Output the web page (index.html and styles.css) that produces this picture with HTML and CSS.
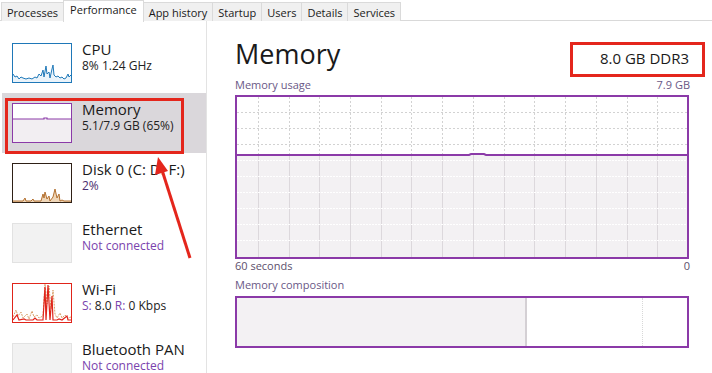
FILE: index.html
```html
<!DOCTYPE html>
<html lang="en">
<head>
    <meta charset="UTF-8">
    <title>Task Manager - Performance</title>
    <link rel="stylesheet" href="styles.css">
</head>
<body>
    <div class="tabs">
        <div class="tab">Processes</div>
        <div class="tab active">Performance</div>
        <div class="tab">App history</div>
        <div class="tab">Startup</div>
        <div class="tab">Users</div>
        <div class="tab">Details</div>
        <div class="tab">Services</div>
    </div>

    <div class="main">
        <div class="sidebar">
            <div class="item">
                <div class="thumb thumb-cpu">
                    <svg width="58" height="38" viewBox="0 0 58 38">
                        <polygon fill="#eaf3fa" points="0,38 0,30 2,33 4,32 6,35 8,33 10,34 13,35 16,34 19,35 22,33 24,34 26,30 28,32 30,26 31,33 33,22 34,30 36,28 37,34 39,25 40,21 41,31 43,33 45,32 47,34 49,33 51,35 53,34 55,30 56,33 58,31 58,38"/>
                        <polyline fill="none" stroke="#1f78b8" stroke-width="1" points="0,30 2,33 4,32 6,35 8,33 10,34 13,35 16,34 19,35 22,33 24,34 26,30 28,32 30,26 31,33 33,22 34,30 36,28 37,34 39,25 40,21 41,31 43,33 45,32 47,34 49,33 51,35 53,34 55,30 56,33 58,31"/>
                    </svg>
                </div>
                <div class="info">
                    <div class="name">CPU</div>
                    <div class="sub">8% 1.24 GHz</div>
                </div>
            </div>
            <div class="item selected">
                <div class="thumb thumb-mem">
                    <svg width="58" height="38" viewBox="0 0 58 38">
                        <rect x="0" y="15" width="58" height="23" fill="#f2eef2"/>
                        <polyline fill="none" stroke="#8b3aa8" stroke-width="1.2" points="0,15 31,15 31,14 34,14 34,15 58,15"/>
                    </svg>
                </div>
                <div class="info">
                    <div class="name">Memory</div>
                    <div class="sub">5.1/7.9 GB (65%)</div>
                </div>
            </div>
            <div class="item">
                <div class="thumb thumb-disk">
                    <svg width="58" height="38" viewBox="0 0 58 38">
                        <polygon fill="#efd6b8" points="0,38 0,37 10,37 12,34 13,37 18,37 20,35 21,37 28,37 30,30 31,34 32,28 34,35 36,32 37,37 40,33 42,25 44,34 46,30 47,37 49,36 51,37 58,37 58,38"/>
                        <polyline fill="none" stroke="#b3702f" stroke-width="1" points="0,37 10,37 12,34 13,37 18,37 20,35 21,37 28,37 30,30 31,34 32,28 34,35 36,32 37,37 40,33 42,25 44,34 46,30 47,37 49,36 51,37 58,37"/>
                    </svg>
                </div>
                <div class="info">
                    <div class="name">Disk 0 (C: D: F:)</div>
                    <div class="sub sub-pct">2%</div>
                </div>
            </div>
            <div class="item">
                <div class="thumb thumb-off"></div>
                <div class="info">
                    <div class="name">Ethernet</div>
                    <div class="sub sub-off">Not connected</div>
                </div>
            </div>
            <div class="item">
                <div class="thumb thumb-wifi">
                    <svg width="58" height="38" viewBox="0 0 58 38">
                        <polyline fill="none" stroke="#d9a06a" stroke-width="1" stroke-dasharray="2 1" points="0,33 3,26 5,32 8,28 10,34 14,30 16,35 19,27 21,33 24,31 26,34 30,32 32,0 34,20 36,2 38,25 40,6 42,30 44,34 47,29 49,34 52,31 55,34 58,33"/>
                        <polyline fill="none" stroke="#e0241a" stroke-width="1.2" points="0,36 4,31 6,36 11,35 13,36 20,36 22,34 24,36 30,36 32,3 33,36 35,1 37,36 39,12 40,36 44,36 46,35 49,36 54,32 55,36 58,36"/>
                    </svg>
                </div>
                <div class="info">
                    <div class="name">Wi-Fi</div>
                    <div class="sub"><span class="lbl">S:</span> 8.0 <span class="lbl">R:</span> 0 Kbps</div>
                </div>
            </div>
            <div class="item">
                <div class="thumb thumb-off"></div>
                <div class="info">
                    <div class="name">Bluetooth PAN</div>
                    <div class="sub sub-off">Not connected</div>
                </div>
            </div>
        </div>

        <div class="panel">
            <div class="head">
                <h1>Memory</h1>
                <div class="spec">8.0 GB DDR3</div>
            </div>
            <div class="caption">
                <span>Memory usage</span>
                <span>7.9 GB</span>
            </div>
            <div class="graph">
                <svg width="450" height="160" viewBox="0 0 450 160">
                    <rect x="0" y="57" width="450" height="103" fill="#f3f1f3"/>
                    <g stroke="#d2d2d2" stroke-width="1" stroke-dasharray="2 2">
                        <line x1="21.5" y1="0" x2="21.5" y2="57"/>
                        <line x1="52.5" y1="0" x2="52.5" y2="57"/>
                        <line x1="82.5" y1="0" x2="82.5" y2="57"/>
                        <line x1="113.5" y1="0" x2="113.5" y2="57"/>
                        <line x1="144.5" y1="0" x2="144.5" y2="57"/>
                        <line x1="174.5" y1="0" x2="174.5" y2="57"/>
                        <line x1="205.5" y1="0" x2="205.5" y2="57"/>
                        <line x1="236.5" y1="0" x2="236.5" y2="57"/>
                        <line x1="267.5" y1="0" x2="267.5" y2="57"/>
                        <line x1="297.5" y1="0" x2="297.5" y2="57"/>
                        <line x1="328.5" y1="0" x2="328.5" y2="57"/>
                        <line x1="359.5" y1="0" x2="359.5" y2="57"/>
                        <line x1="390.5" y1="0" x2="390.5" y2="57"/>
                        <line x1="420.5" y1="0" x2="420.5" y2="57"/>
                        <line x1="0" y1="15.5" x2="450" y2="15.5"/>
                        <line x1="0" y1="31.5" x2="450" y2="31.5"/>
                        <line x1="0" y1="47.5" x2="450" y2="47.5"/>
                    </g>
                    <g stroke="#dcd8dc" stroke-width="1">
                        <line x1="21.5" y1="57" x2="21.5" y2="160"/>
                        <line x1="52.5" y1="57" x2="52.5" y2="160"/>
                        <line x1="82.5" y1="57" x2="82.5" y2="160"/>
                        <line x1="113.5" y1="57" x2="113.5" y2="160"/>
                        <line x1="144.5" y1="57" x2="144.5" y2="160"/>
                        <line x1="174.5" y1="57" x2="174.5" y2="160"/>
                        <line x1="205.5" y1="57" x2="205.5" y2="160"/>
                        <line x1="236.5" y1="57" x2="236.5" y2="160"/>
                        <line x1="267.5" y1="57" x2="267.5" y2="160"/>
                        <line x1="297.5" y1="57" x2="297.5" y2="160"/>
                        <line x1="328.5" y1="57" x2="328.5" y2="160"/>
                        <line x1="359.5" y1="57" x2="359.5" y2="160"/>
                        <line x1="390.5" y1="57" x2="390.5" y2="160"/>
                        <line x1="420.5" y1="57" x2="420.5" y2="160"/>
                    </g>
                    <g stroke="#ffffff" stroke-width="1" stroke-dasharray="2 1">
                        <line x1="0" y1="63.5" x2="450" y2="63.5"/>
                        <line x1="0" y1="79.5" x2="450" y2="79.5"/>
                        <line x1="0" y1="95.5" x2="450" y2="95.5"/>
                        <line x1="0" y1="111.5" x2="450" y2="111.5"/>
                        <line x1="0" y1="127.5" x2="450" y2="127.5"/>
                        <line x1="0" y1="143.5" x2="450" y2="143.5"/>
                    </g>
                    <polyline fill="none" stroke="#8b3aa8" stroke-width="2" points="0,58 232,58 234,57 247,57 249,58 450,58"/>
                </svg>
            </div>
            <div class="caption axis">
                <span>60 seconds</span>
                <span>0</span>
            </div>
            <div class="caption comp-label">
                <span>Memory composition</span>
            </div>
            <div class="composition">
                <div class="seg seg-used"></div>
                <div class="seg seg-modified"></div>
                <div class="seg seg-standby"></div>
                <div class="seg seg-free"></div>
            </div>
        </div>
    </div>

    <!-- annotations drawn over the screenshot -->
    <div class="mark mark-item"></div>
    <div class="mark mark-spec"></div>
    <svg class="arrows" width="712" height="373" viewBox="0 0 712 373">
        <line x1="190" y1="258" x2="162" y2="170" stroke="#e4261c" stroke-width="3"/>
        <polygon fill="#e4261c" points="158,157 155,175 168,171"/>
        <polygon fill="#e4261c" points="103,7 107,0 116,0"/>
    </svg>
</body>
</html>
```

FILE: styles.css
```css
body {
    margin: 0;
    width: 712px;
    height: 373px;
    overflow: hidden;
    background: #fff;
    font-family: "Open Sans", "Noto Sans", sans-serif;
    color: #1a1a1a;
    position: relative;
}

/* tab strip */
.tabs {
    display: flex;
    height: 20px;
    padding-left: 1px;
    border-bottom: 1px solid #d9d9d9;
}
.tab {
    margin-top: 2px;
    padding: 0 5px;
    height: 18px;
    line-height: 19px;
    font-size: 11px;
    background: #f0f0f0;
    border: 1px solid #dadada;
    border-bottom: none;
    margin-right: -1px;
}
.tab.active {
    margin-top: 0;
    height: 21px;
    line-height: 17px;
    padding: 0 6px;
    background: #fff;
    position: relative;
    z-index: 1;
}

.main {
    display: flex;
}

/* left list */
.sidebar {
    width: 204px;
    padding: 12px 0 0 2px;
    border-right: 1px solid #e3e3e3;
    flex-shrink: 0;
}
.item {
    display: flex;
    height: 60px;
    box-sizing: border-box;
    padding-left: 10px;
    gap: 10px;
}
.item.selected {
    background: #dad7db;
}
.thumb {
    width: 58px;
    height: 38px;
    margin-top: 10px;
    border: 1px solid #ccc;
    background: #fff;
    flex-shrink: 0;
}
.thumb svg {
    display: block;
}
.thumb-cpu { border-color: #1f78b8; }
.thumb-mem { border-color: #8b3aa8; }
.thumb-disk { border-color: #2e2016; }
.thumb-wifi { border-color: #e0241a; }
.thumb-off {
    border-color: #e2e2e2;
    background: #f2f2f2;
}
.info {
    padding-top: 7px;
}
.name {
    font-size: 15px;
    line-height: 18px;
    white-space: nowrap;
}
.sub {
    font-size: 12px;
    line-height: 15px;
    color: #222;
    white-space: nowrap;
}
.sub-pct { color: #4b2d6e; }
.sub-off { color: #7a43ad; }
.lbl { color: #7a43ad; }

/* right panel */
.panel {
    flex: 1;
    padding: 16px 22px 0 28px;
}
.head {
    display: flex;
    justify-content: space-between;
    align-items: baseline;
}
h1 {
    margin: 0;
    font-size: 27px;
    line-height: 34px;
    font-weight: normal;
}
.spec {
    font-size: 15px;
    padding-right: 1px;
}
.caption {
    display: flex;
    justify-content: space-between;
    font-size: 11px;
    line-height: 14px;
    color: #6a5886;
    margin-top: 7px;
    margin-bottom: 3px;
}
.graph {
    width: 450px;
    height: 160px;
    border: 2px solid #8b3aa8;
}
.graph svg {
    display: block;
}
.caption.axis {
    margin: 0;
    color: #5c4f6c;
}
.caption.comp-label {
    margin: 5px 0 4px;
}
.composition {
    display: flex;
    width: 450px;
    height: 48px;
    border: 2px solid #8b3aa8;
}
.seg-used {
    width: 288px;
    background: #f3f1f3;
}
.seg-modified {
    width: 2px;
    background: #d4d0d4;
}
.seg-standby {
    width: 115px;
    border-right: 1px dotted #d8d8d8;
}
.seg-free {
    flex: 1;
}

/* red annotation marks */
.mark {
    position: absolute;
    border: 3px solid #e4261c;
    box-sizing: border-box;
}
.mark-item {
    left: 5px;
    top: 98px;
    width: 179px;
    height: 56px;
}
.mark-spec {
    left: 570px;
    top: 42px;
    width: 135px;
    height: 35px;
}
.arrows {
    position: absolute;
    left: 0;
    top: 0;
    pointer-events: none;
}
```
